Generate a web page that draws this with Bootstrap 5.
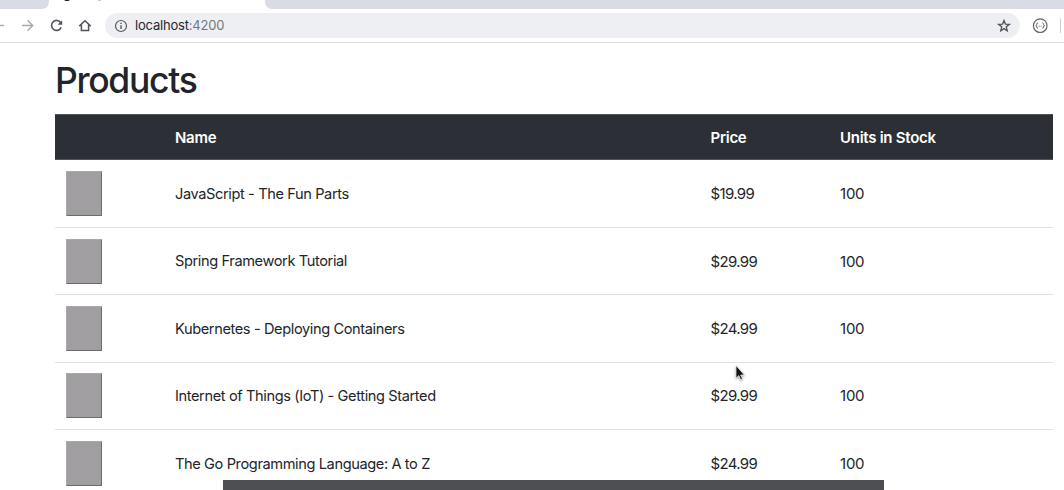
<!DOCTYPE html>
<html lang="en">
<head>
<meta charset="utf-8">
<title>Products</title>
<link href="https://cdn.jsdelivr.net/npm/bootstrap@5.3.0/dist/css/bootstrap.min.css" rel="stylesheet">
<style>
html, body { height: 490px; overflow: hidden; }
body { font-family: Inter, "Liberation Sans", sans-serif; color: #212529; background: #fff; }
.tabstrip { height: 9px; background: #fff; }
.tab-bg { background: #d9dce4; }
.tab-left { width: 49px; border-bottom-right-radius: 7px; }
.tab-active { width: 216px; }
.tab-right { border-bottom-left-radius: 7px; }
.favicon { width: 8px; height: 8px; left: 14px; top: -7px; background: #111; }
.tab-title { left: 49px; top: 0; width: 3px; height: 1px; background: #c8c8c8; }
.toolbar { height: 34px; border-bottom: 1px solid #dcdcde; }
.toolbar svg { display: block; flex: none; }
.omnibox { width: 915px; height: 25px; background: #eeeff3; border-radius: 13px; padding-left: 9px; padding-right: 9px; }
.address { font-size: 13px; line-height: 25px; margin-left: 7px; color: #25282c; letter-spacing: -.2px; }
.address span { color: #73777d; }
.page { padding: 16px 11px 0 55px; }
h1 { font-size: 35.5px; line-height: 43px; font-weight: 500; margin: 0 0 12.4px; letter-spacing: -1.3px; }
.products { table-layout: fixed; border-collapse: separate; border-spacing: 0; font-size: 15px; letter-spacing: -.22px; width: 998px; color: #212529; }
.products > thead > tr > th { height: 46px; padding: 2px 11px 0; background: #2c3036; color: #fff; border: solid #51555a; border-width: 1px 0; font-weight: 600; vertical-align: middle; letter-spacing: -.27px; }
.products > tbody > tr > td { height: 67.45px; padding: 1.6px 11px 0; border: 0; border-bottom: 1px solid #dfe1e5; }
.products > tbody > tr > td:first-child { padding-top: 0; }
.products > tbody > tr > td:nth-child(2) { font-size: 14.6px; letter-spacing: -.39px; padding-top: 2.4px; }
.products > tbody > tr > td:nth-child(3) { letter-spacing: -.65px; }
.cover { width: 36px; height: 45px; background: #a09ea0; border: 1px solid #aaa8aa; border-right-color: #6d6b6d; border-bottom-color: #6d6b6d; border-radius: 1px; }
.caption-bar { left: 223px; width: 661px; top: 480px; height: 10px; background: #4d4e52; }
.pointer { left: 733px; top: 363px; filter: drop-shadow(0 1px 1px rgba(0,0,0,.4)); }
</style>
</head>
<body class="position-relative">
<header>
  <div class="tabstrip d-flex">
    <div class="tab-left tab-bg"></div>
    <div class="tab-active bg-white position-relative overflow-hidden"><i class="favicon position-absolute rounded-circle"></i><i class="tab-title position-absolute"></i></div>
    <div class="tab-right tab-bg flex-grow-1"></div>
  </div>
  <div class="toolbar d-flex align-items-center bg-white">
    <svg width="105" height="33" viewBox="0 0 105 33" fill="none" stroke-width="1.4">
      <path d="M0 16.5H4" stroke="#a6a8ab"/>
      <path d="M22 16.5H32.5M27.5 11.3L32.7 16.5L27.5 21.7" stroke="#a6a8ab"/>
      <path d="M60.8 13.8A5 5 0 1 0 61.2 18.2" stroke="#505358" stroke-width="1.6"/>
      <path d="M62.2 11.2V15.8H57.6Z" fill="#505358"/>
      <path d="M79.3 17.1L85 11.7L90.7 17.1M81.4 16V21.4H88.6V16" stroke="#505358" stroke-width="1.5"/>
    </svg>
    <div class="omnibox d-flex align-items-center">
      <svg width="14" height="14" viewBox="0 0 14 14" fill="none" stroke="#55585d" stroke-width="1.2"><circle cx="7" cy="7" r="5.5"/><path d="M7 6.3V10M7 3.8V5.1" stroke-width="1.4"/></svg>
      <div class="address">localhost<span>:4200</span></div>
      <svg class="ms-auto" width="14" height="14" viewBox="0 0 14 14" fill="none" stroke="#505358" stroke-width="1.35"><path d="M7 1.6L8.4 5.1L12.3 5.4L9.3 7.8L10.2 11.7L7 9.6L3.8 11.7L4.7 7.8L1.7 5.4L5.6 5.1Z"/></svg>
    </div>
    <svg width="44" height="33" viewBox="0 0 44 33" fill="none" stroke="#606368"><circle cx="20.2" cy="16.7" r="6.8" stroke-width="1.2"/><path d="M18 13.9Q16.8 13.9 16.8 15.3Q16.8 16.7 15.8 16.7Q16.8 16.7 16.8 18Q16.8 19.3 18 19.3M22.4 13.9Q23.6 13.9 23.6 15.3Q23.6 16.7 24.6 16.7Q23.6 16.7 23.6 18Q23.6 19.3 22.4 19.3"/><path d="M18.7 17.2h1M20.7 17.2h1"/><path d="M40.5 9.5V24" stroke="#cdced1"/></svg>
  </div>
</header>
<main class="page">
  <h1>Products</h1>
  <table class="products table align-middle mb-0">
    <colgroup><col style="width:109px"><col style="width:535.5px"><col style="width:129.5px"><col></colgroup>
    <thead><tr><th></th><th>Name</th><th>Price</th><th>Units in Stock</th></tr></thead>
    <tbody>
      <tr><td><div class="cover"></div></td><td>JavaScript - The Fun Parts</td><td>$19.99</td><td>100</td></tr>
      <tr><td><div class="cover"></div></td><td>Spring Framework Tutorial</td><td>$29.99</td><td>100</td></tr>
      <tr><td><div class="cover"></div></td><td>Kubernetes - Deploying Containers</td><td>$24.99</td><td>100</td></tr>
      <tr><td><div class="cover"></div></td><td>Internet of Things (IoT) - Getting Started</td><td>$29.99</td><td>100</td></tr>
      <tr><td><div class="cover"></div></td><td>The Go Programming Language: A to Z</td><td>$24.99</td><td>100</td></tr>
    </tbody>
  </table>
</main>
<div class="caption-bar position-absolute"></div>
<svg class="pointer position-absolute" width="14" height="20" viewBox="0 0 14 20"><path d="M3 2.5V15.2L5.8 12.6L7.7 16.8L9.5 16L7.7 12H11.4Z" fill="#111" stroke="#fff" stroke-width=".7"/></svg>
</body>
</html>
